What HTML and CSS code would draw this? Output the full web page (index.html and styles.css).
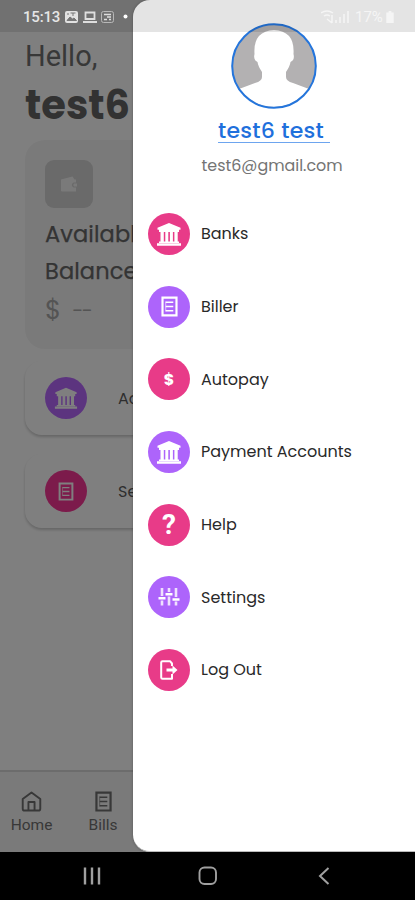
FILE: index.html
```html
<!DOCTYPE html>
<html lang="en">
<head>
<meta charset="utf-8">
<title>Account menu</title>
<link rel="stylesheet" href="styles.css">
</head>
<body>
<svg class="defs" aria-hidden="true">
  <symbol id="bank" viewBox="0 0 26 26">
    <path fill="currentColor" d="M13 2 24.5 6.700V8.700H1.500V6.700ZM3 8.700H23V11H3ZM4.500 11H7.800V20.500H4.500ZM9.300 11H12.300V20.500H9.300ZM13.900 11H16.900V20.500H13.900ZM18.400 11H21.700V20.500H18.400ZM3 20.500H23V22H3ZM1 22.300H25V24.700H1Z"/>
  </symbol>
  <symbol id="bill" viewBox="0 0 18 22">
    <path fill="none" stroke="currentColor" stroke-width="2.300" d="M1.600 1.600H16.400V20.400H1.600Z"/>
    <path fill="none" stroke="currentColor" stroke-width="1.600" d="M5 6.500H13M5 11H13M5 15.500H13"/>
    <path fill="none" stroke="currentColor" stroke-width="1" stroke-opacity=".65" d="M5 5.700V16.300"/>
  </symbol>
</svg>
<div class="phone">
  <header class="status">
    <span class="clock">15:13</span>
    <svg class="notices" viewBox="0 0 66 14">
      <rect x="0" y="1" width="13" height="12" rx="2" fill="#e2e2e2"/>
      <path d="M2 10.500 5 7l2.500 2 1.500-1 2.500 2.500ZM3 3v2M5.500 3h5M8 3v3" fill="#777" stroke="#777"/>
      <path d="M20.500 2.500h9v6.500h-9ZM18 12h14" fill="none" stroke="#dedede" stroke-width="1.800"/>
      <rect x="36.500" y="1.500" width="12" height="11" rx="2" fill="none" stroke="#b8b8b8"/>
      <path d="M39 4.500h7M42 7h4M39 9.500h3M44 9.500h2" stroke="#ddd" stroke-width="1.500"/>
      <circle cx="60.500" cy="6.500" r="2" fill="#fff"/>
    </svg>
    <svg class="signal" viewBox="0 0 30 14">
      <path d="M0 3q6-4 12 0M3 6q3-2 6 0M6 9l5 4M11 5v8M15 10v3M19 7v6M23 4v9M27 1v12" fill="none" stroke="currentColor" stroke-width="1.500"/>
    </svg>
    <span class="level">17%</span>
    <svg class="battery" viewBox="0 0 8 13"><path fill="currentColor" d="M2.500 0h3v1.500H8V13H0V1.500h2.500Z"/></svg>
  </header>

  <main class="home">
    <p class="hello">Hello,</p>
    <h1 class="name">test6</h1>
    <section class="balance">
      <div class="wallet"><svg viewBox="0 0 18 18"><path fill="currentColor" d="M1 4.500 12.500 1.500 14.500 4.500H16V7.500H13.500Q10 10 13.500 12.500H16V16.500H2Q1 16.500 1 15.500ZM14 8.500H17V11.500H14Q12.500 10 14 8.500Z"/></svg></div>
      <p class="caption">Available<br>Balance</p>
      <p class="amount"><span>$</span><span class="dashes">--</span></p>
    </section>
    <section class="action first"><span class="dot violet"><svg class="i-bank"><use href="#bank"/></svg></span><span>Add</span></section>
    <section class="action second"><span class="dot pink"><svg class="i-bill"><use href="#bill"/></svg></span><span>See</span></section>
    <nav class="tabs">
      <div class="tab home-tab"><svg viewBox="0 0 22 22"><path fill="none" stroke="currentColor" stroke-width="2" stroke-linejoin="round" d="M1.800 8.500 11 1.500 20.200 8.500V18.500Q20.200 20.500 18 20.500H4Q1.800 20.500 1.800 18.500ZM7.800 20V11.500H14.200V20"/></svg><span>Home</span></div>
      <div class="tab bills-tab"><svg><use href="#bill"/></svg><span>Bills</span></div>
    </nav>
  </main>

  <div class="scrim"></div>
  <aside class="drawer">
    <svg class="avatar" viewBox="0 0 86 86">
      <defs><clipPath id="round"><circle cx="43" cy="43" r="41"/></clipPath></defs>
      <circle cx="43" cy="43" r="42" fill="#b3b1b2"/>
      <path clip-path="url(#round)" fill="#fff" d="M0 69 24 60Q31 58 31 54V49Q27 43 26.500 39 22 37 23.500 31 22 8 43 7 64 8 62.500 31 64 37 59.500 39 59 43 55 49V54Q55 58 62 60L86 69V86H0Z"/>
      <circle cx="43" cy="43" r="41.800" fill="none" stroke="#2475dc" stroke-width="2"/>
    </svg>
    <a class="user">test6 test</a>
    <p class="email">test6@gmail.com</p>
    <ul class="menu">
      <li><span class="dot pink"><svg class="i-bank"><use href="#bank"/></svg></span><span class="label">Banks</span></li>
      <li><span class="dot violet"><svg class="i-bill"><use href="#bill"/></svg></span><span class="label">Biller</span></li>
      <li><span class="dot pink"><b class="dollar">$</b></span><span class="label">Autopay</span></li>
      <li><span class="dot violet"><svg class="i-bank"><use href="#bank"/></svg></span><span class="label">Payment Accounts</span></li>
      <li><span class="dot pink"><b class="question">?</b></span><span class="label">Help</span></li>
      <li><span class="dot violet"><svg class="i-sliders" viewBox="0 0 22 20"><path stroke="currentColor" stroke-opacity=".8" stroke-width="2.600" d="M4 1V9M4 13.500V18.500M11 1V5M11 9.500V18.500M18 1V10M18 14.500V18.500"/><path stroke="currentColor" stroke-width="2.500" d="M.5 11.200H7.500M7.500 7.200H14.500M14.500 12.500H21.500"/></svg></span><span class="label">Settings</span></li>
      <li><span class="dot pink"><svg class="i-exit" viewBox="0 0 18 20"><path fill="none" stroke="currentColor" stroke-width="2" stroke-linejoin="round" d="M12 6V3.500L10 1.200H2.500Q1.200 1.200 1.200 2.500V17.500Q1.200 18.800 2.500 18.800H12V14"/><path fill="currentColor" d="M6.500 8.500H12.500V5.500L17.500 10 12.500 14.500V11.500H6.500Z"/></svg></span><span class="label">Log Out</span></li>
    </ul>
  </aside>

  <footer class="system">
    <svg class="recents" viewBox="0 0 18 18"><path stroke="currentColor" stroke-width="2.400" d="M2 .5V17.500M9 .5V17.500M16 .5V17.500"/></svg>
    <svg class="circle" viewBox="0 0 20 20"><rect x="1.500" y="1.500" width="16.500" height="16.500" rx="5" fill="none" stroke="currentColor" stroke-width="1.900"/></svg>
    <svg class="back" viewBox="0 0 12 18"><path fill="none" stroke="currentColor" stroke-width="2" d="M10.500 1 2 9 10.500 17"/></svg>
  </footer>
</div>
</body>
</html>
```
FILE: styles.css
```css
* { box-sizing: border-box; margin: 0; padding: 0; }
body { background: #000; overflow: hidden; font-family: Poppins, Inter, sans-serif; }
svg { display: block; flex: none; }
.defs { position: absolute; width: 0; height: 0; }
.phone { position: relative; width: 415px; height: 900px; overflow: hidden; display: flex; flex-direction: column; }

.status { position: absolute; z-index: 3; top: 0; left: 0; width: 415px; height: 32px; padding: 2px 20px 0 23px; display: flex; align-items: center; background: rgba(0,0,0,.105); color: #f5f5f5; font-family: Roboto, sans-serif; }
.clock { width: 42px; color: #e6e6e6; font-weight: 500; font-size: 15px; letter-spacing: -.2px; }
.notices { width: 66px; height: 14px; }
.signal { width: 30px; height: 14px; margin-left: 190px; }
.level { width: 31px; margin-left: 4px; font-size: 15px; }
.battery { width: 8px; height: 12px; }

.home { height: 852px; padding: 32px 0 0 25px; background: #fff; display: flex; flex-direction: column; }
.hello { margin-top: 6px; font: 29px/36px Roboto, sans-serif; color: #707070; }
.name { margin-top: 7px; height: 47px; font-weight: 700; font-size: 40px; line-height: 48px; color: #646464; }
.balance { margin-top: 12px; width: 365px; height: 209px; padding: 20px; border-radius: 20px; background: #f5f5f5; flex: none; }
.wallet { width: 48px; height: 48px; border-radius: 9px; background: #d4d4d4; color: #f5f5f5; display: grid; place-items: center; }
.wallet svg { width: 18px; height: 18px; }
.caption { margin-top: 8px; font-size: 22.500px; line-height: 36.500px; color: #686868; letter-spacing: .1px; -webkit-text-stroke: .25px #686868; }
.amount { display: flex; gap: 11px; font-size: 26px; line-height: 43px; color: #a8a8a8; }
.dashes { font-size: 20px; letter-spacing: -1.500px; }
.action { width: 365px; padding-left: 20px; display: flex; align-items: center; gap: 31px; border-radius: 17px; background: #fff; box-shadow: 0 2px 3px rgba(0,0,0,.2); color: #5c5c5c; font-size: 16px; flex: none; }
.first { height: 74px; margin-top: 12px; }
.second { height: 74px; margin-top: 19px; }
.tabs { height: 82px; margin: auto 0 0 -25px; padding-top: 19px; display: flex; border-top: 2px solid #d8d8d8; background: #f5f5f5; color: #707070; }
.tab { display: flex; flex-direction: column; align-items: center; gap: 4px; font: 15.500px/18px Roboto, sans-serif; }
.tab svg { width: 21px; height: 21px; }
.home-tab { width: 63px; }
.bills-tab { width: 80px; }
.scrim { position: absolute; top: 0; left: 0; width: 415px; height: 852px; background: rgba(0,0,0,.5); }

.drawer { position: absolute; top: 0; left: 133px; width: 282px; height: 852px; padding-top: 23px; display: flex; flex-direction: column; align-items: center; border-radius: 17px 0 0 17px; border-bottom: 1px solid #bbb; background: #fff; box-shadow: 0 0 3px rgba(0,0,0,.3); }
.avatar { width: 86px; height: 86px; }
.user { width: 112px; height: 32px; margin-top: 2px; padding-top: 4px; border-bottom: 1.500px solid #6da5ef; color: #1f70dc; font-size: 22px; line-height: 32px; font-weight: 500; letter-spacing: .28px; white-space: pre; }
.email { width: 145px; margin-top: 11px; color: #747474; font-size: 15.900px; line-height: 24px; white-space: nowrap; }
.menu { align-self: stretch; list-style: none; margin-top: 34.700px; padding-left: 15px; display: grid; grid-auto-rows: 42.500px; row-gap: 30.170px; }
.menu li { display: flex; align-items: center; gap: 11px; color: #292929; font-size: 16px; line-height: 24px; }
.label { padding-top: 1px; }
.dot { width: 42px; height: 42px; flex: none; border-radius: 50%; display: grid; place-items: center; color: #fff; }
.pink { background: #e83b88; }
.violet { background: #ad64fb; }
.home .pink { background: #f83696; }
.home .violet { background: #b969ff; }
.i-bank { width: 26px; height: 26px; }
.home .i-bank { width: 24px; height: 24px; }
.i-bill { width: 17px; height: 21px; }
.home .i-bill { width: 16px; height: 19px; }
.i-sliders { width: 22px; height: 20px; }
.i-exit { width: 18px; height: 20px; }
.dollar { font-size: 16px; line-height: 20px; padding-top: 1px; }
.question { font: 700 28px/30px Roboto, sans-serif; padding-top: 1px; }

.system { height: 48px; display: flex; align-items: center; background: #000; color: #a0a0a0; }
.recents { width: 18px; height: 18px; margin-left: 83px; }
.circle { width: 20px; height: 20px; margin-left: 97px; }
.back { width: 12px; height: 18px; margin-left: 100px; }
```
